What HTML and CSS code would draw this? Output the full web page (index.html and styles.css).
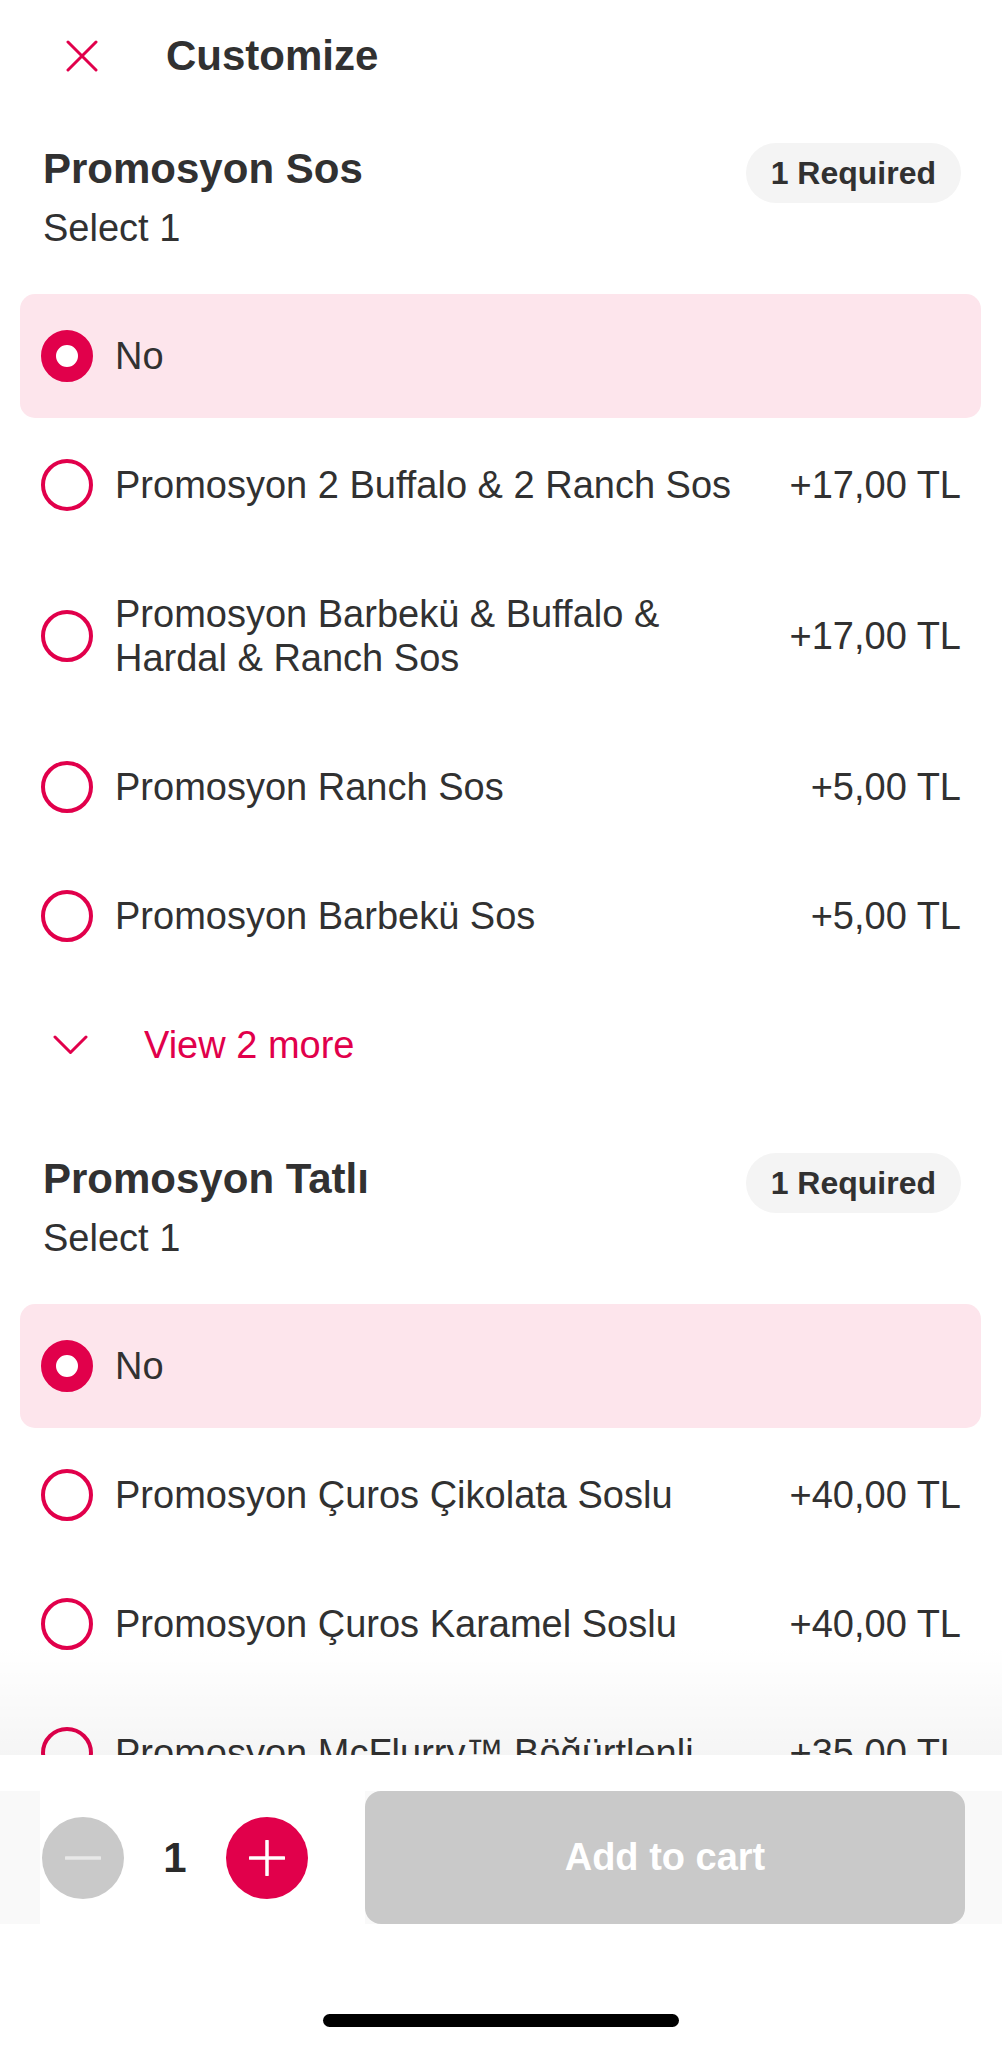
FILE: index.html
```html
<!DOCTYPE html>
<html lang="tr">
<head>
<meta charset="utf-8">
<title>Customize</title>
<link rel="stylesheet" href="styles.css">
</head>
<body>
<div class="screen">
  <header class="header">
    <svg class="close-icon" viewBox="0 0 32 32" width="32" height="32" aria-hidden="true">
      <path d="M2 2 L30 30 M30 2 L2 30" stroke="#e1004b" stroke-width="3" stroke-linecap="round" fill="none"/>
    </svg>
    <h1 class="header-title">Customize</h1>
  </header>

  <main class="content">
    <section class="group">
      <div class="group-head">
        <div class="group-titles">
          <h2 class="group-title">Promosyon Sos</h2>
          <div class="group-sub">Select 1</div>
        </div>
        <span class="pill">1 Required</span>
      </div>
      <div class="options">
        <div class="option selected"><span class="radio"></span><span class="opt-name">No</span></div>
        <div class="option"><span class="radio"></span><span class="opt-name">Promosyon 2 Buffalo &amp; 2 Ranch Sos</span><span class="opt-price">+17,00 TL</span></div>
        <div class="option"><span class="radio"></span><span class="opt-name">Promosyon Barbekü &amp; Buffalo &amp; Hardal &amp; Ranch Sos</span><span class="opt-price">+17,00 TL</span></div>
        <div class="option"><span class="radio"></span><span class="opt-name">Promosyon Ranch Sos</span><span class="opt-price">+5,00 TL</span></div>
        <div class="option"><span class="radio"></span><span class="opt-name">Promosyon Barbekü Sos</span><span class="opt-price">+5,00 TL</span></div>
        <div class="option view-more">
          <svg class="chevron" viewBox="0 0 35 20" width="35" height="20" aria-hidden="true">
            <path d="M2 2 L17.5 17.5 L33 2" stroke="#e1004b" stroke-width="3" stroke-linecap="round" stroke-linejoin="round" fill="none"/>
          </svg>
          <span class="view-more-text">View 2 more</span>
        </div>
      </div>
    </section>

    <section class="group">
      <div class="group-head">
        <div class="group-titles">
          <h2 class="group-title">Promosyon Tatlı</h2>
          <div class="group-sub">Select 1</div>
        </div>
        <span class="pill">1 Required</span>
      </div>
      <div class="options">
        <div class="option selected"><span class="radio"></span><span class="opt-name">No</span></div>
        <div class="option"><span class="radio"></span><span class="opt-name">Promosyon Çuros Çikolata Soslu</span><span class="opt-price">+40,00 TL</span></div>
        <div class="option"><span class="radio"></span><span class="opt-name">Promosyon Çuros Karamel Soslu</span><span class="opt-price">+40,00 TL</span></div>
        <div class="option"><span class="radio"></span><span class="opt-name">Promosyon McFlurry™ Böğürtlenli</span><span class="opt-price">+35,00 TL</span></div>
      </div>
    </section>
  </main>

  <div class="fade"></div>

  <footer class="bottom-bar">
    <div class="controls">
      <div class="stepper">
        <button class="step-btn minus" aria-label="Decrease">
          <svg viewBox="0 0 36 36" width="36" height="36" aria-hidden="true"><path d="M1 18 H35" stroke="#e8e8e8" stroke-width="3.5" stroke-linecap="round"/></svg>
        </button>
        <span class="count">1</span>
        <button class="step-btn plus" aria-label="Increase">
          <svg viewBox="0 0 36 36" width="36" height="36" aria-hidden="true"><path d="M1 18 H35 M18 1 V35" stroke="#ffffff" stroke-width="3.5" stroke-linecap="round"/></svg>
        </button>
      </div>
      <button class="add-btn">Add to cart</button>
    </div>
    <div class="home-indicator"></div>
  </footer>
</div>
</body>
</html>
```

FILE: styles.css
```css
* { box-sizing: border-box; }

html, body {
  margin: 0;
  padding: 0;
  background: #ffffff;
}

body {
  font-family: "Liberation Sans", Arial, sans-serif;
  color: #313131;
}

.screen {
  position: relative;
  width: 1002px;
  height: 2048px;
  overflow: hidden;
  background: #ffffff;
}

/* Header */
.header {
  height: 112px;
  display: flex;
  align-items: center;
  padding-left: 66px;
  gap: 68px;
}

.close-icon { display: block; flex: none; }

.header-title {
  margin: 0;
  font-size: 42px;
  line-height: 50px;
  font-weight: 700;
  color: #313131;
}

/* Groups */
.group {
  padding: 31px 41px 0 43px;
}

.group + .group {
  margin-top: 15px;
}

.group-head {
  display: flex;
  justify-content: space-between;
  align-items: flex-start;
}

.group-titles {
  padding-top: 1px;
}

.group-title {
  margin: 0;
  font-size: 42px;
  line-height: 50px;
  font-weight: 700;
  color: #313131;
}

.group-sub {
  margin-top: 11px;
  font-size: 38px;
  line-height: 46px;
  color: #313131;
}

.pill {
  flex: none;
  height: 60px;
  padding: 0 25px;
  border-radius: 30px;
  background: #f4f4f4;
  font-size: 32px;
  line-height: 60px;
  font-weight: 700;
  color: #313131;
}

/* Options */
.options {
  margin: 43px -20px 0 -23px;
  display: flex;
  flex-direction: column;
  gap: 5px;
}

.option {
  display: flex;
  align-items: center;
  min-height: 124px;
  padding: 40px 20px 40px 21px;
  border-radius: 15px;
  font-size: 38px;
  line-height: 44px;
}

.option.selected {
  background: #fde5ec;
}

.radio {
  flex: none;
  width: 52px;
  height: 52px;
  border-radius: 50%;
  border: 4px solid #e1004b;
  background: #ffffff;
  margin: -4px 22px -4px 0;
}

.option.selected .radio {
  border-width: 15px;
}

.opt-name {
  flex: 1;
  color: #313131;
}

.opt-price {
  flex: none;
  margin-left: 40px;
  color: #313131;
}

.view-more {
  padding-left: 33px;
}

.chevron {
  display: block;
  flex: none;
  margin-right: 56px;
}

.view-more-text {
  color: #e1004b;
}

/* Fade above bottom bar */
.fade {
  position: absolute;
  left: 0;
  right: 0;
  bottom: 293px;
  height: 110px;
  background: linear-gradient(to bottom, rgba(0, 0, 0, 0), rgba(0, 0, 0, 0.04));
  pointer-events: none;
}

/* Bottom bar */
.bottom-bar {
  position: absolute;
  left: 0;
  right: 0;
  bottom: 0;
  height: 293px;
  background: #ffffff;
  display: flex;
  flex-direction: column;
  align-items: center;
  padding-top: 36px;
}

.controls {
  width: 100%;
  height: 133px;
  display: flex;
  align-items: stretch;
  padding: 0 37px 0 40px;
  background: #f9f9f9;
}

.stepper {
  display: flex;
  align-items: center;
  padding: 0 57px 0 2px;
  background: #ffffff;
}

.step-btn {
  width: 82px;
  height: 82px;
  border-radius: 50%;
  border: none;
  padding: 0;
  display: flex;
  align-items: center;
  justify-content: center;
}

.step-btn svg { display: block; }

.step-btn.minus { background: #c9c9c9; }
.step-btn.plus { background: #e1004b; }

.count {
  width: 102px;
  text-align: center;
  font-size: 42px;
  font-weight: 700;
  line-height: 50px;
  color: #2a2a2a;
}

.add-btn {
  flex: 1;
  border: none;
  border-radius: 16px;
  background: #c9c9c9;
  color: #ffffff;
  font-family: "Liberation Sans", Arial, sans-serif;
  font-size: 38px;
  font-weight: 700;
}

.home-indicator {
  margin-top: 90px;
  width: 356px;
  height: 13px;
  border-radius: 7px;
  background: #000000;
}
```
